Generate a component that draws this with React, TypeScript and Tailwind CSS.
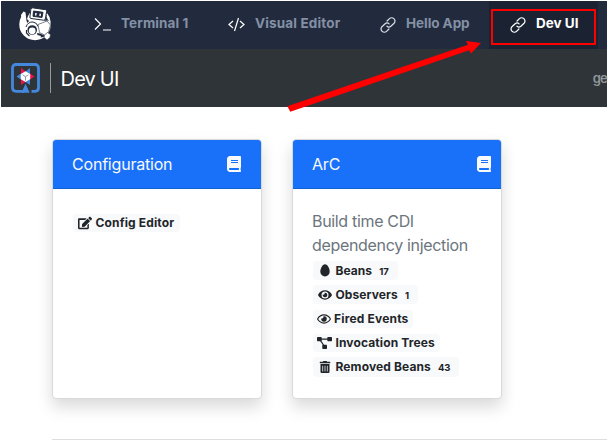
import React from "react";
import { FaBook, FaEdit, FaEye, FaRegEye, FaTrashAlt } from "react-icons/fa";

function Mascot() {
  return (
    <svg width="34" height="34" viewBox="0 0 34 34" className="mb-[2px] ml-[17px] shrink-0">
      <circle cx="17" cy="17.5" r="15.7" fill="#fff" />
      <path d="M3.5 9 5.5 5 11 1.5 13 4 10 9 9 12 11 14 9.500 16 7 13Z" fill="#222b3d" />
      <path d="m3 8 2.500-3.500 2 1L8.500 14l1.500 3-3 2-3.500-6Z" fill="#fff" />
      <path d="M28 7.500 31 10 32 14 29 13.500 26 14 26.500 13 28 12Z" fill="#222b3d" />
      <path d="M29 6 31.500 10 32.500 15 30 13 28.500 10Z" fill="#fff" />
      <path d="M14 0.800 27.500 2.700 Q29 3 28.600 4.500L27.300 12Q27 13.400 25.500 13.200L13 11.500Q11.600 11.200 11.900 10L12.900 2Z" fill="#fff" stroke="#222b3d" strokeWidth="1" />
      <path d="m15.500 4 9.500 1.300-1 5.200-9-1.200Z" fill="#222b3d" stroke="#222b3d" strokeWidth="1" strokeLinejoin="round" />
      <path d="m18 6-.3 2.500m4.600-1.900-.3 2.500" stroke="#fff" strokeWidth="1.500" />
      <path d="M8 20q2-5.500 7-5 4 .5 5 4.500" fill="none" stroke="#222b3d" strokeWidth="1" />
      <circle cx="14.200" cy="23" r="4.800" fill="#222b3d" />
      <circle cx="14.200" cy="23.800" r="3.400" fill="#fff" />
      <path d="m8.500 23 0 3 3 3" fill="none" stroke="#222b3d" strokeWidth="1.200" />
      <path d="M20 17.500 29 14 32.500 18 30.500 25 27.500 28.500 21.500 25.500Z" fill="#fff" stroke="#222b3d" strokeWidth=".6" />
      <path d="m19 26 3 .5 4.500 2-1 1.500-3 .5.500-1.500-3.500-1Z" fill="#222b3d" />
      <path d="m26.500 28 3-2.500 3 2-.5 3-3 2.500-3-2.500Z" fill="#fff" stroke="#222b3d" strokeWidth=".6" />
    </svg>
  );
}

function QuarkusLogo() {
  return (
    <svg width="29" height="30" viewBox="0 0 29 30" className="shrink-0">
      <path d="M20.500 28.300H24Q27.500 28.300 27.500 24.800V5Q27.500 1.500 24 1.500H5Q1.500 1.500 1.500 5V24.800Q1.500 28.300 5 28.300H13" fill="none" stroke="#4488dd" strokeWidth="2.800" />
      <path d="m14.500 20.500 4.200 9.200H10.500Z" fill="#4488dd" />
      <path d="m10 5 4.500 3.500-4.500 2.700ZM23.500 13.500 19 16.500v-6ZM10 22v-5.800l4.500 2.700Z" fill="#f0104c" />
      <path d="m19 5-4.500 3.500 4.500 2.700ZM5.500 13.500 10 16.500v-6ZM19 22v-5.800l-4.500 2.700Z" fill="#4488dd" />
      <path d="m14.500 8.300 4.700 2.800v5.200L14.500 19 9.800 16.300v-5.200Z" fill="#fff" />
      <path d="m11.500 11.800 3 1.800 3-1.800m-3 1.800v4" fill="none" stroke="#777d85" strokeWidth=".8" />
    </svg>
  );
}

function ChainIcon() {
  return (
    <svg width="16" height="16" viewBox="0 0 17.400 17.400" className="mb-px shrink-0" fill="none" stroke="currentColor" strokeWidth="1.350" strokeLinecap="round">
      <path d="m7.700 4.400 2.600-2.600a3.300 3.300 0 0 1 4.700 0l.3.300a3.300 3.300 0 0 1 0 4.700l-3.500 3.300a3.100 3.100 0 0 1-4.300-.2" />
      <path d="m9.700 13-2.600 2.600a3.300 3.300 0 0 1-4.700 0l-.3-.3a3.300 3.300 0 0 1 0-4.700l3.500-3.300a3.100 3.100 0 0 1 4.300.2" />
    </svg>
  );
}

function DiagramIcon() {
  return (
    <svg width="15" height="12" viewBox="0 0 15 12" fill="currentColor">
      <rect width="4.700" height="4.300" rx=".7" />
      <rect x="10.300" width="4.700" height="4.300" rx=".7" />
      <rect x="5.300" y="7.700" width="4.700" height="4.300" rx=".7" />
      <path d="M4 2.200h7M3.500 3.500l3.300 5" fill="none" stroke="currentColor" strokeWidth="1.300" />
    </svg>
  );
}

const badgeBase = "flex items-center rounded-[4px] bg-[#f8f9fa] text-[#212529]";

function Badge({ icon, label, count, size, iconBox, track }: { icon: React.ReactNode; label: string; count?: string; size: string; iconBox: string; track: string }) {
  return (
    <div className="flex h-6 items-start">
      <div className={`${badgeBase} ${size}`}>
        <span className={`flex shrink-0 items-center ${iconBox}`}>{icon}</span>
        <span className={`whitespace-nowrap text-[12px] leading-[18px] font-bold ${track}`}>{label}</span>
        {count && <span className="ml-[7px] pt-[2px] text-[9.500px] leading-[16px] font-bold">{count}</span>}
      </div>
    </div>
  );
}

function Card({ title, children, iconMargin }: { title: string; children: React.ReactNode; iconMargin: string }) {
  return (
    <section className="h-[260px] w-[210px] rounded-[4px] border border-[#d9d9d9] bg-white shadow-[0_8px_16px_rgba(0,0,0,0.15)]">
      <header className="flex h-[49px] items-center justify-between rounded-t-[3px] border-b border-[#1263d8] bg-[#1971fa] pl-[19px] text-[#f8f9fa]">
        <h2 className="text-[16px] tracking-[-0.2px]">{title}</h2>
        <FaBook size={16} className={iconMargin} />
      </header>
      {children}
    </section>
  );
}

export default function App() {
  return (
    <div className="h-[446px] w-[608px] overflow-hidden bg-white font-['Inter','Liberation_Sans',sans-serif]">
      <div className="relative pt-px pl-px">
        <nav className="flex h-12 w-[606px] items-center bg-[#222b3d] text-[13.500px] font-bold text-[#8390a5]">
          <Mascot />
          <div className="ml-[42px] flex w-[95px] items-center">
            <svg width="18" height="15" viewBox="0 0 18 15" className="mb-[2px] shrink-0 text-white" fill="none" stroke="currentColor" strokeWidth="1.200"><path d="m1 1.500 5.500 5.500L1 12.500M9 13h8" /></svg>
            <span className="mb-1 ml-[9px] whitespace-nowrap tracking-[0.100px]">Terminal 1</span>
          </div>
          <div className="ml-[39px] flex w-[113px] items-center">
            <svg width="17" height="15" viewBox="0 0 17 15" className="mb-[2px] shrink-0 text-white" fill="none" stroke="currentColor" strokeWidth="1.200"><path d="M5 4 1 7.500 5 11M12 4l4 3.500-4 3.500M10.500 1 6.500 14" /></svg>
            <span className="mb-1 ml-[10px] whitespace-nowrap tracking-[0.150px]">Visual Editor</span>
          </div>
          <div className="ml-[39px] flex w-[109px] items-center">
            <span className="text-[#d9dde5]"><ChainIcon /></span>
            <span className="mb-1 ml-[10px] whitespace-nowrap tracking-[-0.050px]">Hello App</span>
          </div>
          <div className="flex h-12 w-[109px] items-center bg-[#1b2333] pl-[21px] text-white">
            <ChainIcon />
            <span className="mb-1 ml-[10px] whitespace-nowrap tracking-[0px]">Dev UI</span>
          </div>
        </nav>
        <header className="flex h-[58px] w-[606px] items-center bg-[#2f3438] pl-[10px]">
          <QuarkusLogo />
          <div className="ml-[10px] h-[30px] w-px bg-[#989b9e]" />
          <h1 className="mt-[1px] ml-[9.500px] text-[20px] tracking-[-0.800px] text-white">Dev UI</h1>
          <span className="mt-[2px] ml-auto text-[13px] font-semibold tracking-[-0.800px] text-[#929699]">ge</span>
        </header>
        <svg width="608" height="120" viewBox="0 0 608 120" className="pointer-events-none absolute top-0 left-0" fill="#ff0000">
          <path d="M287.300 106.300 400 67.700 468 44.700 466 41 481 43 471 53.500 469 50.200 400 74 290.300 111.700Z" />
          <rect x="492" y="10" width="103" height="34" fill="none" stroke="#ff0000" strokeWidth="2" />
        </svg>
      </div>
      <main className="pt-8 pl-[52px]">
        <div className="flex gap-[30px]">
          <Card title="Configuration" iconMargin="mr-[19px]">
            <div className="pt-[25px] pl-5">
              <Badge icon={<FaEdit size={14} />} label="Config Editor" size="h-[18px] w-[107px]" iconBox="w-[22.500px] pl-[5px]" track="tracking-[0.150px]" />
            </div>
          </Card>
          <Card title="ArC" iconMargin="mr-[9px]">
            <div className="pt-5 pl-5">
              <p className="-ml-px h-12 whitespace-nowrap text-[16px] leading-6 tracking-[-0.330px] text-[#6c757d]">Build time CDI<br />dependency injection</p>
              <div className="pt-[5px]">
                <Badge icon={<svg width="10" height="13" viewBox="0 0 10 13"><path d="M5 .3C2.300.3.3 4.800.3 7.800a4.700 4.700 0 0 0 9.400 0C9.700 4.800 7.700.3 5 .3Z" fill="currentColor" /></svg>} label="Beans" count="17" size="-mt-px h-[19px] w-[85px]" iconBox="w-[22.500px] pl-[7px]" track="tracking-[0.050px]" />
                <Badge icon={<FaEye size={14} />} label="Observers" count="1" size="-mt-px h-[19px] w-[105px]" iconBox="w-[22.500px] pl-[5px]" track="tracking-[0.100px]" />
                <Badge icon={<FaRegEye size={14} />} label="Fired Events" size="h-[18px] w-[100px]" iconBox="w-[21px] pl-[4px]" track="tracking-[0.180px]" />
                <Badge icon={<DiagramIcon />} label="Invocation Trees" size="h-[18px] w-[127px]" iconBox="w-[22.500px] pl-[4px]" track="tracking-[0.120px]" />
                <Badge icon={<FaTrashAlt size={12} />} label="Removed Beans" count="43" size="-mt-px h-[20px] w-[146px]" iconBox="w-[22.500px] pl-[6px]" track="tracking-[0.120px]" />
              </div>
            </div>
          </Card>
        </div>
        <div className="mt-10 w-[555px] border-t border-[#dedede]" />
      </main>
    </div>
  );
}
